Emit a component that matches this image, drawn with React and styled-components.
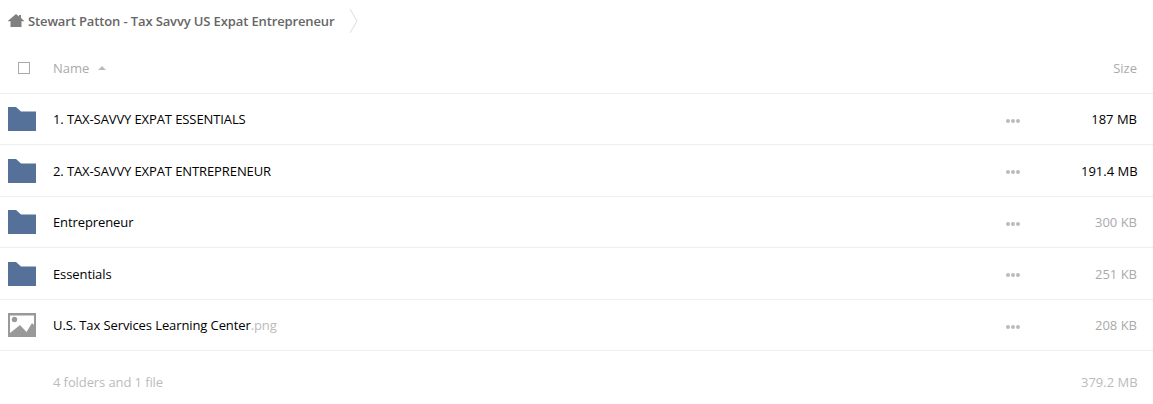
import React from 'react';
import styled, { createGlobalStyle } from 'styled-components';

const GlobalStyle = createGlobalStyle`
  html, body { margin: 0; padding: 0; background: #fff; }
  body { font-family: "Open Sans", sans-serif; font-size: 13px; color: #000; }
`;

const Page = styled.div`
  width: 1153px;
  height: 404px;
  overflow: hidden;
`;

const Crumbs = styled.div`
  height: 42px;
  display: flex;
  align-items: center;
  padding-left: 8px;
  color: #666;
  font-size: 13px;
  font-weight: 600;
`;

const CrumbText = styled.span`
  margin-left: 4px;
  letter-spacing: -0.13px;
`;

const CrumbArrow = styled.svg`
  margin-left: 15px;
`;

const Row = styled.div`
  height: ${p => p.$h || 51.5}px;
  box-sizing: border-box;
  padding-top: 1px;
  display: flex;
  align-items: center;
  border-bottom: ${p => (p.$plain ? 'none' : '1px solid #eee')};
  color: ${p => (p.$muted ? '#bbb' : '#000')};
`;

const IconCell = styled.div`
  width: 53px;
  flex: none;
  display: flex;
  align-items: center;
  padding-left: 8px;
  box-sizing: border-box;
`;

const Check = styled.div`
  width: 10px;
  height: 10px;
  margin-left: 10px;
  border: 1px solid #aaa;
`;

const NameCell = styled.div`
  flex: 1;
  display: flex;
  align-items: center;
  letter-spacing: -0.1px;
`;

const HeadLabel = styled.span`
  color: #aaa;
  letter-spacing: 0;
`;

const Caret = styled.span`
  width: 0;
  height: 0;
  margin-left: 9px;
  border-left: 4px solid transparent;
  border-right: 4px solid transparent;
  border-bottom: 4px solid #bbb;
`;

const Ext = styled.span`
  color: #bbb;
`;

const More = styled.div`
  width: 14px;
  display: flex;
  gap: 1px;
  margin-right: 61px;
  margin-top: 3px;
`;

const Dot = styled.span`
  width: 4px;
  height: 4px;
  border-radius: 50%;
  background: #bbb;
`;

const Size = styled.div`
  width: 56px;
  margin-right: 16px;
  flex: none;
  text-align: right;
  white-space: nowrap;
  color: ${p => p.$color || '#000'};
`;

const HomeIcon = () => (
  <svg width="16" height="14" viewBox="0 0 16 14">
    <path fill="#808080" d="M8 0 L11 2.4 V1 H13 V4 L16 6.8 V7.2 H13.5 V13 H2.5 V7.2 H0 V6.8 Z" />
  </svg>
);

const FolderIcon = () => (
  <svg width="28" height="24" viewBox="0 0 28 24">
    <path fill="#557199" d="M0 0 H8 L13 4.5 H28 V24 H0 Z" />
  </svg>
);

const ImageIcon = () => (
  <svg width="28" height="24" viewBox="0 0 28 24">
    <path fill="#999" fillRule="evenodd" d="M0 0 H28 V24 H0 Z M2 2.5 V21 H26 V2.5 Z" />
    <circle cx="6.5" cy="6.5" r="2.7" fill="#999" />
    <path fill="#999" d="M2 20 L12 12 L18.5 19 L24 10 L26 12 V22 H2 Z" />
  </svg>
);

const rows = [
  { name: '1. TAX-SAVVY EXPAT ESSENTIALS', size: '187 MB', color: '#000' },
  { name: '2. TAX-SAVVY EXPAT ENTREPRENEUR', size: '191.4 MB', color: '#000' },
  { name: 'Entrepreneur', size: '300 KB', color: '#aaa' },
  { name: 'Essentials', size: '251 KB', color: '#aaa' },
  { name: 'U.S. Tax Services Learning Center', ext: '.png', size: '208 KB', color: '#aaa', image: true },
];

export default function App() {
  return (
    <Page>
      <GlobalStyle />
      <Crumbs>
        <HomeIcon />
        <CrumbText>Stewart Patton - Tax Savvy US Expat Entrepreneur</CrumbText>
        <CrumbArrow width="10" height="26" viewBox="0 0 10 26">
          <path fill="none" stroke="#ddd" d="M1 1 L8 13 L1 25" />
        </CrumbArrow>
      </Crumbs>
      <Row $h={51.5}>
        <IconCell><Check /></IconCell>
        <NameCell>
          <HeadLabel>Name</HeadLabel>
          <Caret />
        </NameCell>
        <Size $color="#aaa">Size</Size>
      </Row>
      {rows.map(r => (
        <Row key={r.name}>
          <IconCell>{r.image ? <ImageIcon /> : <FolderIcon />}</IconCell>
          <NameCell>{r.name}{r.ext && <Ext>{r.ext}</Ext>}</NameCell>
          <More><Dot /><Dot /><Dot /></More>
          <Size $color={r.color}>{r.size}</Size>
        </Row>
      ))}
      <Row $h={61} $plain $muted>
        <IconCell />
        <NameCell>4 folders and 1 file</NameCell>
        <Size $color="#bbb">379.2 MB</Size>
      </Row>
    </Page>
  );
}
